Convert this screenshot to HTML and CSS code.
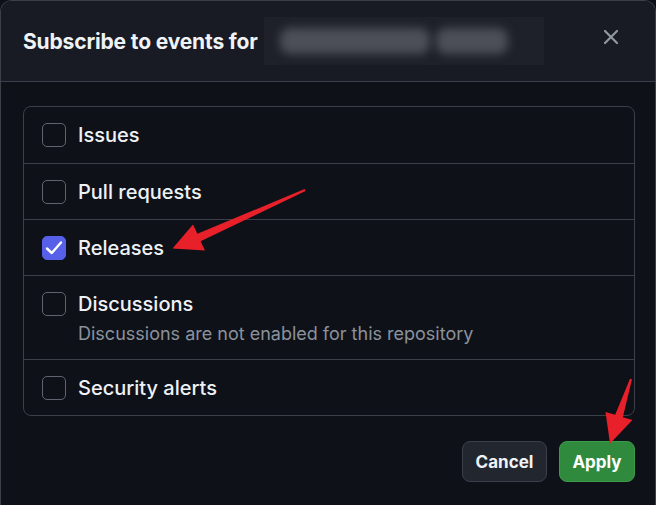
FILE: index.html
```html
<!DOCTYPE html>
<html lang="en">
<head>
<meta charset="utf-8">
<title>Subscribe to events</title>
<link rel="stylesheet" href="styles.css">
</head>
<body>
<div class="dialog">
  <header class="header">
    <h1 class="title">Subscribe to events for</h1>
    <div class="redacted"><span class="blob b1"></span><span class="blob b2"></span></div>
    <button class="close" aria-label="Close">
      <svg width="16" height="16" viewBox="0 0 16 16"><path d="M2 2 L14 14 M14 2 L2 14" stroke="#9198a1" stroke-width="2.2" stroke-linecap="round"/></svg>
    </button>
  </header>
  <main class="body">
    <ul class="list">
      <li class="row"><span class="box"></span><div class="text"><span class="label">Issues</span></div></li>
      <li class="row"><span class="box"></span><div class="text"><span class="label">Pull requests</span></div></li>
      <li class="row"><span class="box checked"><svg width="20" height="20" viewBox="0 0 20 20"><path d="M3 10.5 L7.8 15 L17 4.5" fill="none" stroke="#fff" stroke-width="2.4" stroke-linecap="round" stroke-linejoin="round"/></svg></span><div class="text"><span class="label">Releases</span></div></li>
      <li class="row row-tall"><span class="box"></span><div class="text"><span class="label">Discussions</span><span class="note">Discussions are not enabled for this repository</span></div></li>
      <li class="row"><span class="box"></span><div class="text"><span class="label">Security alerts</span></div></li>
    </ul>
    <div class="footer">
      <button class="btn btn-cancel">Cancel</button>
      <button class="btn btn-apply">Apply</button>
    </div>
  </main>
  <svg class="arrows" width="656" height="505" viewBox="0 0 656 505">
    <polygon fill="#e8202a" points="304.6,189.1 305.6,191 200.6,241.2 205,250.5 172.5,248.5 193,224.5 197.4,233.8"/>
    <polygon fill="#e8202a" points="630,378.7 632,379.3 622.8,417.2 632.5,420 610,443.5 605.5,412 615.2,414.8"/>
  </svg>
</div>
</body>
</html>
```
FILE: styles.css
```css
* { box-sizing: border-box; }
html, body { margin: 0; padding: 0; }
body {
  background: #0d1117;
  font-family: Inter, "Noto Sans", "Liberation Sans", sans-serif;
  color: #e6edf3;
  width: 656px;
  height: 505px;
  overflow: hidden;
}
.dialog {
  position: relative;
  height: 505px;
  background: #0e1118;
  border: 1px solid #3a3f4a;
  border-bottom: none;
  border-radius: 12px 12px 0 0;
}
.header {
  height: 81px;
  background: #181b24;
  border-bottom: 1px solid #3a3f4a;
  border-radius: 11px 11px 0 0;
  display: flex;
  align-items: center;
  padding: 0 22px;
}
.title {
  margin: 0;
  font-size: 21px;
  font-weight: 700;
  letter-spacing: -0.15px;
  color: #f0f3f6;
}
.redacted {
  margin-left: 6px;
  width: 280px;
  height: 48px;
  background: #1e2129;
  display: flex;
  align-items: center;
  padding: 0 16px;
  gap: 6px;
  overflow: hidden;
}
.blob {
  height: 26px;
  background: #4c4f58;
  border-radius: 10px;
  filter: blur(5px);
}
.b1 { width: 150px; }
.b2 { width: 72px; }
.close {
  margin-left: auto;
  margin-right: 14px;
  margin-top: -8px;
  background: none;
  border: none;
  padding: 0;
  width: 16px;
  height: 16px;
  display: flex;
}
.body {
  padding: 24px 20px 0 22px;
}
.list {
  list-style: none;
  margin: 0;
  padding: 0;
  border: 1px solid #3a3f4a;
  border-radius: 8px;
}
.row {
  display: flex;
  align-items: flex-start;
  gap: 12px;
  padding: 16px 18px 0 18px;
  height: 56px;
  border-top: 1px solid #3a3f4a;
}
.row:first-child { border-top: none; height: 56px; }
.row-tall { height: 84px; }
.box {
  flex: none;
  width: 24px;
  height: 24px;
  border: 1px solid #5f6570;
  border-radius: 5px;
  display: flex;
  align-items: center;
  justify-content: center;
}
.box.checked {
  background: #5760e8;
  border-color: #5760e8;
}
.text {
  display: flex;
  flex-direction: column;
}
.label {
  font-size: 20px;
  line-height: 24px;
  font-weight: 500;
  color: #eef1f5;
}
.note {
  margin-top: 8px;
  font-size: 18px;
  line-height: 20px;
  color: #8b929c;
}
.footer {
  display: flex;
  justify-content: flex-end;
  gap: 12px;
  padding-top: 25px;
}
.btn {
  height: 41px;
  border-radius: 8px;
  font-family: inherit;
  font-size: 17px;
  font-weight: 700;
  padding: 0;
  border: 1px solid #3a3f4a;
}
.btn-cancel {
  width: 85px;
  background: #22262f;
  color: #f0f3f6;
}
.btn-apply {
  width: 76px;
  background: #2f8a3d;
  border-color: #3c9a4a;
  color: #ffffff;
}
.arrows {
  position: absolute;
  top: -1px;
  left: -1px;
  pointer-events: none;
}
```
